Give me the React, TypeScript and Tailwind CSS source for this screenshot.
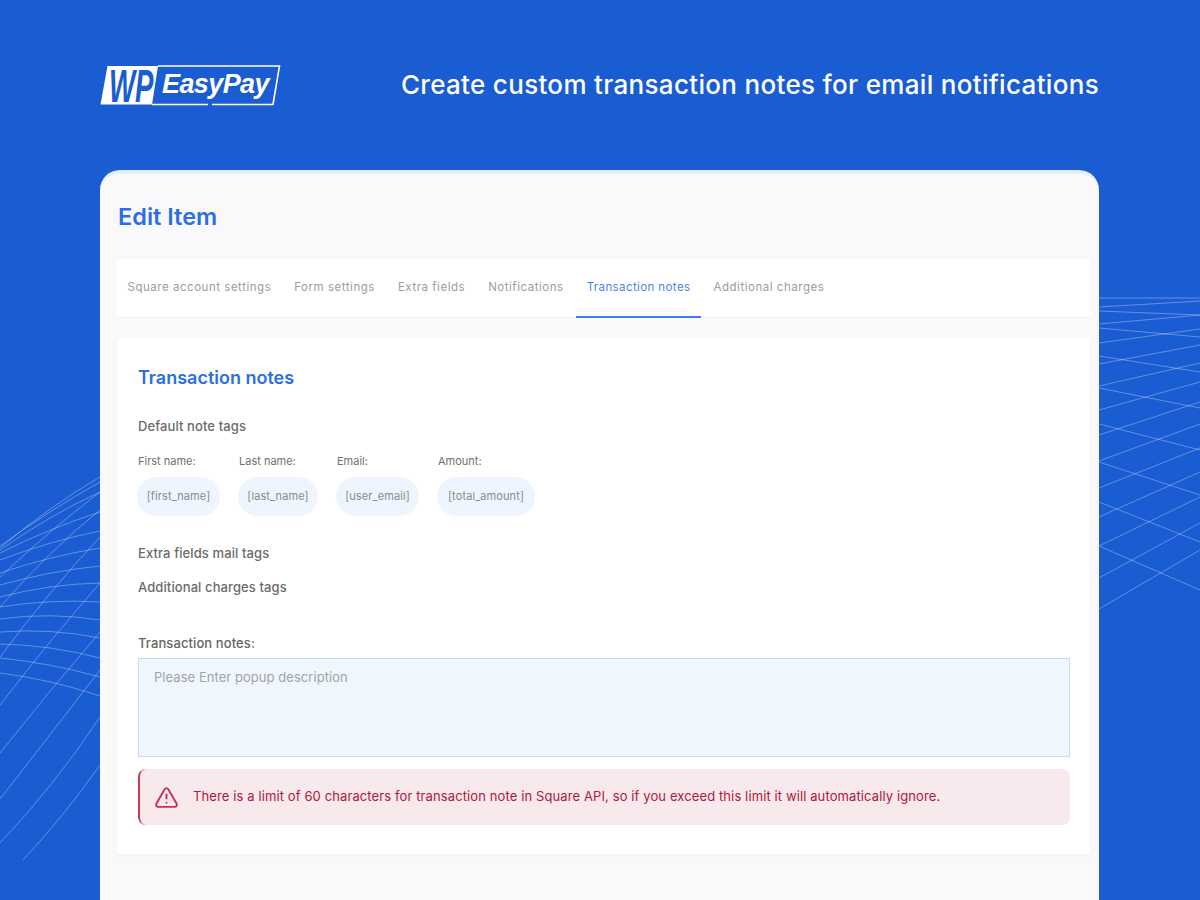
import { AlertTriangle } from "lucide-react";

const font = "font-['Inter','Liberation_Sans',sans-serif]";

const tabs = [
  "Square account settings",
  "Form settings",
  "Extra fields",
  "Notifications",
  "Transaction notes",
  "Additional charges",
];

const tags = [
  { label: "First name:", tag: "[first_name]", cls: "w-[83px]" },
  { label: "Last name:", tag: "[last_name]", cls: "w-[80px]" },
  { label: "Email:", tag: "[user_email]", cls: "w-[83px]" },
  { label: "Amount:", tag: "[total_amount]", cls: "w-[98px]" },
];

// left globe lines
const leftCurves = [
  "M0 673 Q53 680 100 696",
  "M0 658 Q50 663 100 677",
  "M0 644 Q50 645 100 658",
  "M0 632 Q50 628 100 638",
  "M0 619 Q50 612 100 620",
  "M0 607 Q50 599 100 602",
  "M0 597 Q50 584 100 583",
  "M0 585 Q50 571 100 566",
  "M0 573 Q50 556 100 548",
  "M0 560 Q50 541 100 531",
  "M0 553 Q50 528 100 512",
  "M0 550 Q50 515 100 492",
  "M0 548 Q50 506 100 477",
  "M0 546 Q50 510 100 482",
  "M0 705 Q50 640 100 583",
  "M0 753 Q50 690 100 632",
  "M0 799 Q50 735 100 670",
  "M0 843 Q55 785 100 717",
  "M23 860 Q65 815 100 765",
  "M0 657 Q50 590 100 537",
  "M0 607 Q50 550 100 510",
  "M0 577 Q50 530 100 492",
];

// right perspective grid
const rightLines = [
  [1099, 298, 1200, 298],
  [1099, 311, 1200, 315],
  [1099, 328, 1200, 337],
  [1099, 356, 1200, 372],
  [1099, 388, 1200, 408],
  [1099, 424, 1200, 450],
  [1099, 462, 1200, 495],
  [1099, 502, 1200, 542],
  [1099, 546, 1200, 590],
  [1099, 307, 1200, 301],
  [1099, 324, 1200, 315],
  [1099, 343, 1200, 329],
  [1099, 364, 1200, 345],
  [1099, 386, 1200, 363],
  [1099, 410, 1200, 382],
  [1099, 435, 1200, 402],
  [1099, 461, 1200, 424],
  [1099, 488, 1200, 448],
  [1099, 517, 1200, 472],
  [1099, 546, 1200, 497],
  [1099, 578, 1200, 523],
  [1099, 609, 1200, 550],
];

function Backdrop() {
  return (
    <svg className="absolute inset-0" width="1200" height="900" viewBox="0 0 1200 900" fill="none">
      <g stroke="#ffffff" strokeOpacity="0.32" strokeWidth="1">
        {leftCurves.map((d) => (
          <path key={d} d={d} />
        ))}
        {rightLines.map(([x1, y1, x2, y2]) => (
          <line key={`${y1}-${y2}`} x1={x1} y1={y1} x2={x2} y2={y2} />
        ))}
      </g>
    </svg>
  );
}

function Logo() {
  return (
    <svg className="-mt-[6px]" width="182" height="56" viewBox="0 -6 182 56" fill="none">
      <polygon points="7.5,1 58,1 52,39.5 0.5,39.5" fill="#ffffff" />
      <path d="M58 1 H179.5 L173 39.5 H112" stroke="#ffffff" strokeWidth="1.6" />
      <path d="M108 39.5 H52" stroke="#ffffff" strokeWidth="1.6" />
      <text
        transform="translate(9 37) scale(0.6 1)"
        fill="#1a5cd1"
        fontFamily="'Liberation Sans', sans-serif"
        fontSize="46"
        fontWeight="700"
        fontStyle="italic"
      >
        WP
      </text>
      <text
        x="62"
        y="28"
        fill="#ffffff"
        fontFamily="'Liberation Sans', sans-serif"
        fontSize="27"
        fontWeight="700"
        fontStyle="italic"
        letterSpacing="-0.6"
      >
        EasyPay
      </text>
    </svg>
  );
}

export default function App() {
  return (
    <div className={`${font} relative h-[900px] w-[1200px] overflow-hidden bg-[#1a5cd1]`}>
      <Backdrop />
      <div className="relative flex h-[170px] items-start justify-between pl-[100px] pr-[101px] pt-[65px]">
        <Logo />
        <h1 className="mt-[3px] text-[26px] font-medium leading-[34px] tracking-[0.32px] text-white">
          Create custom transaction notes for email notifications
        </h1>
      </div>

      <main className="relative ml-[100px] h-[730px] w-[999px] rounded-t-[20px] border-t-[4px] border-[#e6edfb] bg-[#f9f9fc] pl-[17px] pr-[9px]">
        <h2 className="pl-px pt-[28px] text-[23.5px] font-semibold leading-[30px] text-[#2b6fe0]">Edit Item</h2>

        <nav className="mt-[27px] flex h-[59px] gap-[2px] border-b border-[#eceef2] bg-white">
          {tabs.map((t) => (
            <div
              key={t}
              className={
                t === "Transaction notes"
                  ? "flex h-[59px] items-center border-b-2 border-[#3b7cf0] px-[10.5px] text-[11.5px] tracking-[0.4px] text-[#4f83e8]"
                  : "flex h-[59px] items-center border-b-2 border-transparent px-[10.5px] text-[11.5px] tracking-[0.53px] text-[#9c9c9c]"
              }
            >
              {t}
            </div>
          ))}
        </nav>

        <section className="mt-[20px] h-[516px] bg-white pl-[20px] pr-[20px] pt-[28px] shadow-[0_1px_3px_rgba(0,0,0,0.03)]">
          <h3 className="pl-px text-[18px] font-semibold leading-[24px] text-[#2b6fe0]">Transaction notes</h3>
          <h4 className="mt-[28px] pl-px text-[13px] font-medium leading-[16px] tracking-[0.1px] text-[#6b6b6b]">Default note tags</h4>

          <div className="mt-[20px] flex gap-[18px]">
            {tags.map((t) => (
              <div key={t.tag} className={t.cls}>
                <div className="pl-px text-[11px] leading-[14px] text-[#6f6f6f]">{t.label}</div>
                <div className="mt-[9px] flex h-[39px] items-center justify-center rounded-[20px] bg-[#eef5fe] text-[11px] tracking-[0.1px] text-[#8b8b8b]">
                  {t.tag}
                </div>
              </div>
            ))}
          </div>

          <div className="mt-[29px] pl-px text-[13px] font-medium leading-[16px] tracking-[0.1px] text-[#6b6b6b]">Extra fields mail tags</div>
          <div className="mt-[18px] pl-px text-[13px] font-medium leading-[16px] tracking-[0.1px] text-[#6b6b6b]">Additional charges tags</div>

          <div className="mt-[40px] pl-px text-[13px] font-medium leading-[16px] tracking-[0.1px] text-[#666666]">Transaction notes:</div>
          <textarea
            readOnly
            placeholder="Please Enter popup description"
            className="mt-[7px] ml-px block h-[99px] w-[932px] resize-none border border-[#c4dcfb] bg-[#f0f7fe] px-[15px] py-[9px] text-[13px] leading-[18px] tracking-[0.05px] outline-none placeholder:text-[#a3a3a3]"
          />

          <div className="mt-[12px] ml-px flex h-[56px] items-center gap-[14px] rounded-[8px] border-l-2 border-[#c23a55] bg-[#f7e9ec] pl-[14px]">
            <AlertTriangle size={25} strokeWidth={1.8} className="text-[#c2334f]" />
            <span className="text-[13px] tracking-[0.11px] text-[#b0173d]">
              There is a limit of 60 characters for transaction note in Square API, so if you exceed this limit it will automatically ignore.
            </span>
          </div>
        </section>
      </main>
    </div>
  );
}
